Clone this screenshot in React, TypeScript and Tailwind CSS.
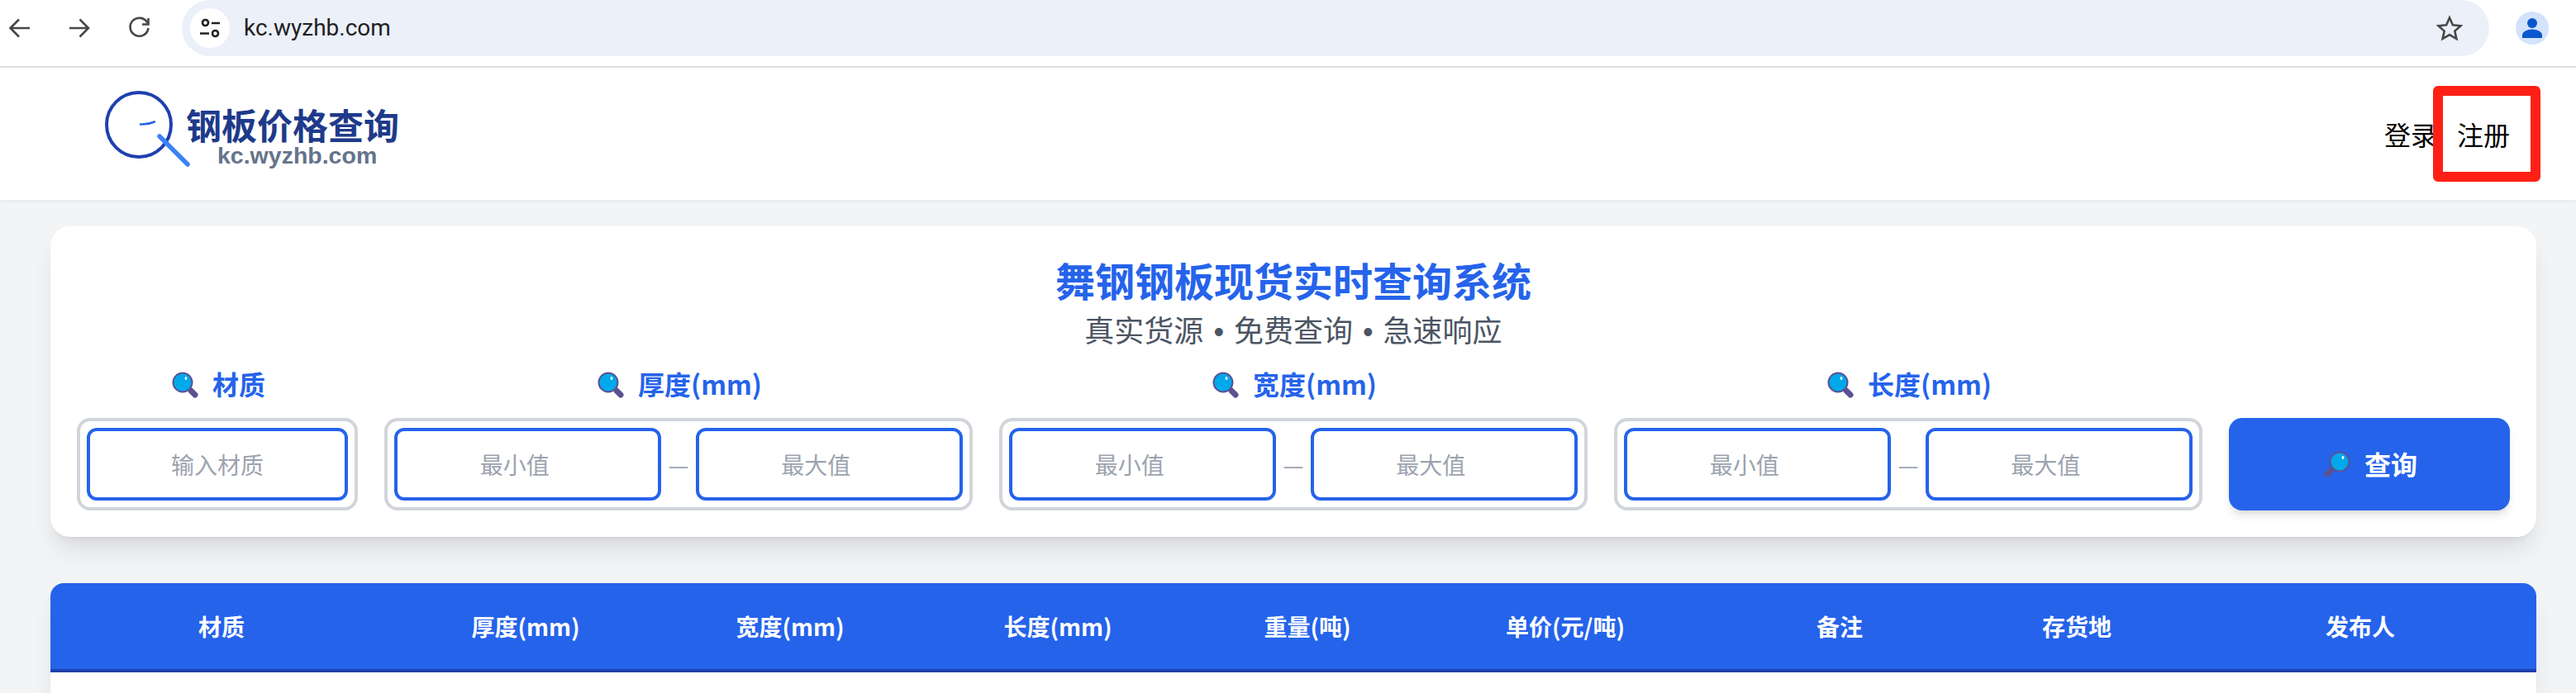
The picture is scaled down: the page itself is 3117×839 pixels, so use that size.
const sans = "font-['Noto_Sans_CJK_SC','Noto_Sans',sans-serif]";

const Magnifier: React.FC<{ flip?: boolean }> = ({ flip }) => {
  return (
    <svg width="32" height="32" viewBox="0 0 32 32" className="shrink-0">
      {flip ? (
        <>
          <line x1="9" y1="23" x2="4" y2="28" stroke="#5c5191" strokeWidth="7" strokeLinecap="round" />
          <circle cx="19" cy="13" r="11.5" fill="#00a8ec" stroke="#5c5191" strokeWidth="2" />
          <ellipse cx="23" cy="8" rx="1.4" ry="2" fill="#ffffff" />
        </>
      ) : (
        <>
          <line x1="23" y1="23" x2="28" y2="28" stroke="#5c5191" strokeWidth="7" strokeLinecap="round" />
          <circle cx="13" cy="13" r="11.5" fill="#00a8ec" stroke="#5c5191" strokeWidth="2" />
          <ellipse cx="17" cy="8" rx="1.4" ry="2" fill="#ffffff" />
        </>
      )}
    </svg>
  );
};

const BrowserBar: React.FC = () => {
  return (
    <div className="flex h-[82px] shrink-0 items-start border-b-2 border-[#e0e0e0] bg-white">
      <div className="mt-[18px] ml-[7px] flex gap-10 text-[#474747]">
        <svg width="32" height="32" viewBox="0 0 32 32" fill="none" stroke="currentColor" strokeWidth="2.6">
          <path d="M29 16H6M16 5.5L5.5 16L16 26.5" />
        </svg>
        <svg width="32" height="32" viewBox="0 0 32 32" fill="none" stroke="currentColor" strokeWidth="2.6" className="ml-px">
          <path d="M4 16H27M16.500 5.500L27 16L16.500 26.500" />
        </svg>
        <svg width="32" height="32" viewBox="0 0 32 32" fill="none" stroke="currentColor" strokeWidth="2.6">
          <path d="M26.500 10A11 11 0 1 0 27.500 16" />
          <path d="M27.500 4V11.500H20" />
        </svg>
      </div>
      <div className="ml-9 flex h-[68px] w-[2792px] items-center rounded-[34px] bg-[#ebf0f9] pr-8 pl-[10px]">
        <div className="flex h-12 w-12 items-center justify-center rounded-full bg-white">
          <svg width="48" height="48" viewBox="0 0 48 48" fill="none" stroke="#1f1f1f" strokeWidth="2.600">
            <circle cx="18.500" cy="17.500" r="3.500" />
            <path d="M26 18H36M12 30.500H23" />
            <circle cx="30.500" cy="30.500" r="3.500" />
          </svg>
        </div>
        <span className="ml-[17px] font-['Roboto',sans-serif] text-[28px] text-[#1f1f1f]">kc.wyzhb.com</span>
        <svg width="32" height="32" viewBox="0 0 32 32" fill="none" stroke="#474747" strokeWidth="2.600" className="ml-auto">
          <path d="M16 3.500L19.900 12.300L29.500 13.200L22.300 19.600L24.400 29L16 24.100L7.600 29L9.700 19.600L2.500 13.200L12.100 12.300Z" />
        </svg>
      </div>
      <div className="mt-[14px] ml-8 flex h-10 w-10 items-center justify-center rounded-full bg-[#d3e3fd]">
        <svg width="40" height="40" viewBox="0 0 40 40" fill="#0b57d0">
          <circle cx="20" cy="14" r="6" />
          <path d="M8 32V28.500C8 24.500 14 21.500 20 21.500C26 21.500 32 24.500 32 28.500V32Z" />
        </svg>
      </div>
    </div>
  );
};

const SiteHeader: React.FC = () => {
  return (
    <header className={`relative flex h-40 shrink-0 items-center justify-between bg-white pr-20 pl-[126px] shadow-[0_2px_4px_rgba(0,0,0,0.06)] ${sans}`}>
      <div className="mb-3 flex h-24 items-end">
        <svg width="104" height="96" viewBox="0 0 104 96" fill="none" className="shrink-0">
          <circle cx="42" cy="43" r="39" stroke="#1e40af" strokeWidth="4" />
          <path d="M44 42.500Q53 43 61 39.500" stroke="#2563eb" strokeWidth="2.500" strokeLinecap="round" />
          <path d="M67 57L101 91" stroke="#3b82f6" strokeWidth="5.500" strokeLinecap="round" />
        </svg>
        <div className="-ml-[5px]">
          <div className="text-[43px] leading-[44px] font-bold text-[#1e3a8a]">钢板价格查询</div>
          <div className="ml-[38px] font-['Liberation_Sans',sans-serif] text-[28.500px] leading-8 font-bold text-[#64748b]">
            kc.wyzhb.com
          </div>
        </div>
      </div>
      <nav className="flex gap-6 text-[32px] leading-none text-black">
        <a>登录</a>
        <a>注册</a>
      </nav>
      {/* annotation drawn on top of the screenshot */}
      <div className="absolute top-[22px] left-[2944px] h-[116px] w-[130px] rounded-[6px] border-[12px] border-[#ff2015]" />
    </header>
  );
};

const FieldLabel: React.FC<{ text: string }> = ({ text }) => {
  return (
    <div className="mb-4 flex h-12 items-center justify-center gap-[17px] pl-[3px] text-[32px] leading-[48px] font-bold text-[#2563eb]">
      <Magnifier />
      <span className="-translate-y-0.5">{text}</span>
    </div>
  );
};

const inputClass =
  "h-[88px] w-full min-w-0 rounded-xl border-4 border-[#2563eb] bg-white text-center text-[28px] outline-none placeholder:text-[#9ca3af]";

const RangeField: React.FC<{ label: string }> = ({ label }) => {
  return (
    <div>
      <FieldLabel text={label} />
      <div className="flex h-28 items-center rounded-2xl border-4 border-[#d1d5db] px-2">
        <input className={`${inputClass} pr-8`} placeholder="最小值" />
        <span className="mx-2 shrink-0 text-[28px] leading-none text-[#9ca3af]">—</span>
        <input className={`${inputClass} pr-8`} placeholder="最大值" />
      </div>
    </div>
  );
};

const Dot: React.FC = () => {
  return <span className="mx-[2px] font-['Liberation_Sans',sans-serif] leading-none"> • </span>;
};

const SearchCard: React.FC = () => {
  return (
    <section className="rounded-3xl bg-white p-8 shadow-[0_20px_30px_-6px_rgba(0,0,0,0.1),0_8px_12px_-8px_rgba(0,0,0,0.1)]">
      <h1 className="text-center text-[48px] leading-16 font-bold text-[#2563eb]">舞钢钢板现货实时查询系统</h1>
      <p className="mb-4 h-14 text-center text-[36px] leading-14 text-[#4b5563]">
        真实货源
        <Dot />
        免费查询
        <Dot />
        急速响应
      </p>
      <div className="grid grid-cols-[340px_1fr_1fr_1fr_340px] gap-8">
        <div>
          <FieldLabel text="材质" />
          <div className="flex h-28 items-center rounded-2xl border-4 border-[#d1d5db] px-2">
            <input className={inputClass} placeholder="输入材质" />
          </div>
        </div>
        <RangeField label="厚度(mm)" />
        <RangeField label="宽度(mm)" />
        <RangeField label="长度(mm)" />
        <div className="flex items-end">
          <button className="flex h-28 w-full items-center justify-center gap-[17px] rounded-2xl bg-[#2563eb] pl-[3px] text-[32px] font-bold text-white shadow-[0_8px_12px_-2px_rgba(0,0,0,0.1),0_4px_8px_-4px_rgba(0,0,0,0.1)]">
            <Magnifier flip />
            <span className="-translate-y-px">查询</span>
          </button>
        </div>
      </div>
    </section>
  );
};

const columns: { title: string; width: string }[] = [
  { title: "材质", width: "w-[414px]" },
  { title: "厚度(mm)", width: "w-[322px]" },
  { title: "宽度(mm)", width: "w-[318px]" },
  { title: "长度(mm)", width: "w-[330px]" },
  { title: "重量(吨)", width: "w-[274px]" },
  { title: "单价(元/吨)", width: "w-[350px]" },
  { title: "备注", width: "w-[314px]" },
  { title: "存货地", width: "w-[260px]" },
  { title: "发布人", width: "w-[426px]" },
];

const StockTable: React.FC = () => {
  return (
    <section className="mt-14 flex-1 rounded-t-2xl bg-white shadow-[0_20px_30px_-6px_rgba(0,0,0,0.1),0_8px_12px_-8px_rgba(0,0,0,0.1)]">
      <table className="w-full table-fixed">
        <thead>
          <tr className="border-b-4 border-[#1e40af] bg-[#2563eb]">
            {columns.map((col, index) => {
              return (
                <th
                  key={index}
                  className={`${col.width} py-8 text-center text-[28px] leading-10 font-bold text-white first:rounded-tl-2xl last:rounded-tr-2xl`}
                >
                  {col.title}
                </th>
              );
            })}
          </tr>
        </thead>
      </table>
    </section>
  );
};

const App: React.FC = () => {
  return (
    <div className={`flex h-[839px] flex-col overflow-hidden bg-[#f3f4f6] ${sans}`}>
      <BrowserBar />
      <SiteHeader />
      <main className="flex flex-1 flex-col pt-8 pr-12 pl-[61px]">
        <SearchCard />
        <StockTable />
      </main>
    </div>
  );
};

export default App;
